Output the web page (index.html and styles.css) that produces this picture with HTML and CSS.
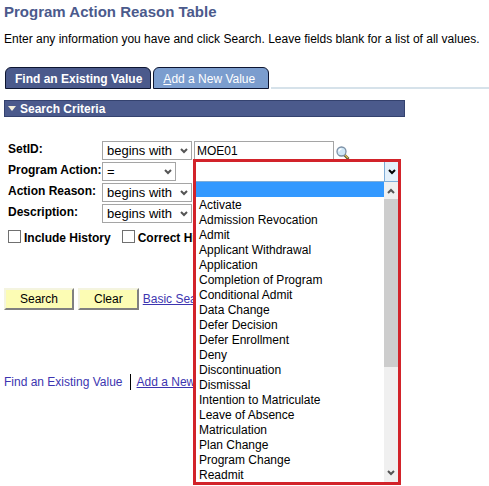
FILE: index.html
```html
<!DOCTYPE html>
<html lang="en">

<head>
    <meta charset="UTF-8">
    <meta name="viewport" content="width=device-width, initial-scale=1.0">
    <title>Program Action Reason Table</title>
    <link rel="stylesheet" href="styles.css">
</head>

<body>

    <h1>Program Action Reason Table</h1>
    <p class="intro">Enter any information you have and click Search. Leave fields blank for a list of all values.</p>

    <!-- TABS -->
    <nav class="tabs">
        <a class="tab active" href="#find">Find an Existing Value</a>
        <a class="tab" href="#add"><u>A</u>dd a New Value</a>
        <span class="tab-line"></span>
    </nav>

    <h2 class="criteria">
        <svg width="8" height="5" viewBox="0 0 8 5"><path d="M0 0h8L4 5z" fill="#f4f0dc"/></svg>
        Search Criteria
    </h2>

    <form class="search">
        <!-- SETID -->
        <div class="row">
            <label for="setid">SetID:</label>
            <div class="pick">
                <select aria-label="SetID operator"><option>begins with</option></select>
                <svg class="arrow" viewBox="0 0 8 6"><path d="M1 1l3 3 3-3"/></svg>
            </div>
            <div class="field">
                <input class="text" type="text" id="setid" value="MOE01">
                <button class="lookup" type="button" aria-label="Look up SetID">
                    <svg width="14" height="14" viewBox="0 0 14 14">
                        <path d="M8.500 9l4 4" stroke="#5c512b" stroke-width="2.600"/>
                        <path d="M9 9l3 3" stroke="#d9bd55" stroke-width="1.200"/>
                        <circle cx="5.500" cy="5.500" r="4.500" fill="#cfe8f8" stroke="#7d90a5" stroke-width="1.300"/>
                        <path d="M3 5.500a2.500 2.500 0 0 1 2.500-2.500" fill="none" stroke="#fff" stroke-width="1.400"/>
                    </svg>
                </button>
            </div>
        </div>

        <!-- PROGRAM ACTION -->
        <div class="row">
            <label for="action">Program Action:</label>
            <div class="pick small">
                <select aria-label="Program Action operator"><option>=</option></select>
                <svg class="arrow" viewBox="0 0 8 6"><path d="M1 1l3 3 3-3"/></svg>
            </div>
            <div class="field">
                <div class="dropdown">
                    <div class="dropdown-top">
                        <select id="action"><option></option></select>
                        <span class="open-btn"><svg class="arrow" viewBox="0 0 8 6"><path d="M1 1l3 3 3-3"/></svg></span>
                    </div>
                    <div class="dropdown-body">
                        <ul role="listbox" aria-label="Program Action">
                            <li class="selected" role="option" aria-selected="true"></li>
                            <li role="option">Activate</li>
                            <li role="option">Admission Revocation</li>
                            <li role="option">Admit</li>
                            <li role="option">Applicant Withdrawal</li>
                            <li role="option">Application</li>
                            <li role="option">Completion of Program</li>
                            <li role="option">Conditional Admit</li>
                            <li role="option">Data Change</li>
                            <li role="option">Defer Decision</li>
                            <li role="option">Defer Enrollment</li>
                            <li role="option">Deny</li>
                            <li role="option">Discontinuation</li>
                            <li role="option">Dismissal</li>
                            <li role="option">Intention to Matriculate</li>
                            <li role="option">Leave of Absence</li>
                            <li role="option">Matriculation</li>
                            <li role="option">Plan Change</li>
                            <li role="option">Program Change</li>
                            <li role="option">Readmit</li>
                        </ul>
                        <div class="scrollbar">
                            <svg class="arrow" viewBox="0 0 8 6"><path d="M1 5l3-3 3 3"/></svg>
                            <div class="thumb"></div>
                            <svg class="arrow" viewBox="0 0 8 6"><path d="M1 1l3 3 3-3"/></svg>
                        </div>
                    </div>
                </div>
            </div>
        </div>

        <!-- ACTION REASON -->
        <div class="row">
            <label for="reason">Action Reason:</label>
            <div class="pick">
                <select aria-label="Action Reason operator"><option>begins with</option></select>
                <svg class="arrow" viewBox="0 0 8 6"><path d="M1 1l3 3 3-3"/></svg>
            </div>
            <div class="field"><input class="text" type="text" id="reason"></div>
        </div>

        <!-- DESCRIPTION -->
        <div class="row">
            <label for="descr">Description:</label>
            <div class="pick">
                <select aria-label="Description operator"><option>begins with</option></select>
                <svg class="arrow" viewBox="0 0 8 6"><path d="M1 1l3 3 3-3"/></svg>
            </div>
            <div class="field"><input class="text" type="text" id="descr"></div>
        </div>

        <div class="checks">
            <label><input type="checkbox">Include History</label>
            <label><input type="checkbox">Correct History</label>
        </div>

        <div class="buttons">
            <button class="btn" type="submit">Search</button>
            <button class="btn" type="reset">Clear</button>
            <a href="#basic">Basic Search</a>
        </div>
    </form>

    <footer class="links">
        <a class="current" href="#find">Find an Existing Value</a>
        <a class="next" href="#add">Add a New Value</a>
    </footer>

</body>

</html>
```

FILE: styles.css
```css
* {
    box-sizing: border-box;
}

body {
    min-height: 100vh;
    margin: 0;
    padding: 3px 0 0 4px;
    background-color: #fff;
    color: #000;
    font-family: "Liberation Sans", Arial, sans-serif;
    font-size: 12px;
    line-height: 16px;
}

h1 {
    margin: 0;
    color: #4b5a8c;
    font-size: 15px;
    line-height: 18px;
}

.intro {
    margin: 10px 0 20px;
    white-space: nowrap;
}

a {
    color: #3c35b0;
}

/* tabs */
.tabs {
    display: flex;
    align-items: flex-end;
    gap: 2px;
    padding-left: 1px;
}

.tab {
    height: 22px;
    padding: 0 13px 0 9px;
    border: 1px solid #0d1530;
    border-radius: 6px 6px 0 0;
    background-color: #7b9dce;
    color: #fff;
    line-height: 22px;
    text-decoration: none;
    white-space: nowrap;
}

.tab.active {
    padding-right: 8px;
    background-color: #4b5a8c;
    font-weight: bold;
}

.tab-line {
    flex: 1;
    height: 2px;
    background-color: #d6e2ea;
}

.criteria {
    display: flex;
    align-items: center;
    gap: 4px;
    max-width: 401px;
    height: 17px;
    margin: 11px 0 24px;
    padding-left: 3px;
    border: 1px solid #34426f;
    background-color: #4b5a8c;
    color: #fff;
    font-size: 12px;
}

/* search form */
.search {
    display: flex;
    flex-direction: column;
    gap: 2px;
    padding-left: 4px;
}

.row {
    display: grid;
    grid-template-columns: 92px 90px 1fr;
    column-gap: 2px;
    height: 19px;
}

.row label {
    font-weight: bold;
    white-space: nowrap;
}

.pick {
    display: grid;
    align-items: center;
}

.pick.small {
    width: 74px;
}

.pick select,
.pick .arrow {
    grid-area: 1 / 1;
}

.pick select {
    width: 100%;
    height: 19px;
    padding: 0 4px;
    border: 1px solid #a5a5a5;
    background-color: #fff;
    color: #000;
    font: 13px "Liberation Sans", Arial, sans-serif;
    appearance: none;
}

.arrow {
    justify-self: end;
    width: 8px;
    height: 6px;
    margin-right: 4px;
    fill: none;
    stroke: #555;
    stroke-width: 2;
    pointer-events: none;
}

.field {
    display: flex;
    align-items: center;
    position: relative;
}

.text {
    width: 140px;
    height: 19px;
    padding: 0 2px;
    border: 1px solid #a5a5a5;
    font: 12px "Liberation Sans", Arial, sans-serif;
}

.lookup {
    height: 14px;
    margin: 4px 0 0 2px;
    padding: 0;
    border: none;
    background: none;
    cursor: pointer;
}

.lookup svg {
    display: block;
}

/* open drop-down list, lies over the rest of the form */
.dropdown {
    position: absolute;
    top: -3px;
    left: -1px;
    z-index: 1;
    width: 208px;
    border: 3px solid #d2232a;
    background-color: #fff;
}

.dropdown-top {
    display: flex;
    height: 20px;
    border-bottom: 1px solid #7fadd8;
}

.dropdown-top select {
    flex: 1;
    border: none;
    background-color: #fff;
    appearance: none;
}

.open-btn {
    display: flex;
    align-items: center;
    justify-content: center;
    width: 14px;
    border-left: 1px solid #7fadd8;
    background-color: #e4f0fb;
}

.open-btn .arrow {
    margin: 0;
    stroke: #000;
}

.dropdown-body {
    display: flex;
}

.dropdown-body ul {
    flex: 1;
    margin: 0;
    padding: 0;
    list-style: none;
}

.dropdown-body li {
    height: 15px;
    padding-left: 3px;
    line-height: 16px;
    white-space: nowrap;
}

.dropdown-body .selected {
    background-color: #3399ff;
}

.scrollbar {
    display: flex;
    flex-direction: column;
    align-items: center;
    width: 14px;
    padding: 6px 0;
    background-color: #f0f0f0;
}

.scrollbar .arrow {
    margin: 0;
}

.thumb {
    width: 100%;
    height: 168px;
    margin: 5px 0 auto;
    background-color: #cdcdcd;
}

/* check boxes */
.checks {
    display: flex;
    gap: 11px;
    margin-top: 5px;
    font-weight: bold;
}

.checks label {
    display: flex;
    gap: 3px;
    white-space: nowrap;
}

.checks input {
    width: 13px;
    height: 13px;
    margin: 0;
    border: 1px solid #707070;
    background-color: #fff;
    appearance: none;
}

/* buttons */
.buttons {
    display: flex;
    align-items: center;
    gap: 4px;
    margin: 40px 0 0 -4px;
}

.btn {
    height: 22px;
    padding: 0 14px;
    border: 2px solid #808080;
    border-top-color: #f4f4e0;
    border-left-color: #f4f4e0;
    background-color: #fcfcb4;
    font: 12px "Liberation Sans", Arial, sans-serif;
    cursor: pointer;
}

/* bottom links */
.links {
    display: flex;
    align-items: center;
    margin-top: 64px;
}

.links .current {
    padding-right: 7px;
    border-right: 1px solid #000;
    text-decoration: none;
}

.links .next {
    padding-left: 6px;
}
```
